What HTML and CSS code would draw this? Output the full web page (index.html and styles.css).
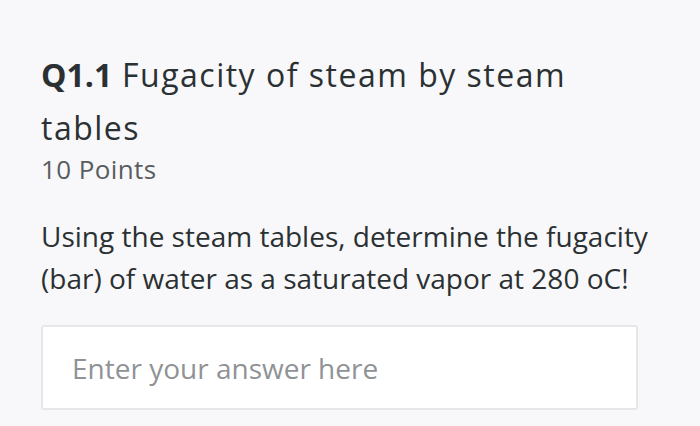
FILE: index.html
```html
<!DOCTYPE html>
<html>
<head>
<meta charset="utf-8">
<link rel="stylesheet" href="styles.css">
</head>
<body>
<main class="question">
  <h1 class="q-title"><span class="q-num">Q1.1</span> <span class="q-name">Fugacity of steam by steam tables</span></h1>
  <div class="q-points">10 Points</div>
  <p class="q-text">Using the steam tables, determine the fugacity (bar) of water as a saturated vapor at 280 oC!</p>
  <div class="answer">
    <input class="answer-input" type="text" placeholder="Enter your answer here">
  </div>
</main>
</body>
</html>
```

FILE: styles.css
```css
html, body {
  margin: 0;
  padding: 0;
  background: #f8f8fa;
}
body {
  font-family: "Open Sans", Lato, sans-serif;
  color: #2b3133;
  width: 700px;
  height: 426px;
  overflow: hidden;
}
.question {
  padding: 48px 0 0 41px;
  width: 597px;
}
.q-title {
  margin: 0;
  font-size: 32px;
  font-weight: 400;
  line-height: 53px;
  letter-spacing: 1.5px;
  width: 597px;
}
.q-num {
  font-weight: 700;
  letter-spacing: 0;
}
.q-points {
  font-size: 26px;
  line-height: 30px;
  letter-spacing: 0.4px;
  color: #585d60;
}
.q-text {
  margin: 31px 0 0 0;
  font-size: 28px;
  line-height: 42px;
  width: 630px;
  color: #2b3133;
}
.answer {
  margin-top: 26px;
}
.answer-input {
  display: block;
  box-sizing: border-box;
  width: 597px;
  height: 85px;
  border: 2px solid #e6e7eb;
  border-radius: 3px;
  background: #ffffff;
  padding: 0 0 0 29px;
  font-family: "Open Sans", Lato, sans-serif;
  font-size: 28px;
  color: #2b3133;
  outline: none;
}
.answer-input::placeholder {
  color: #8f9396;
}
```
